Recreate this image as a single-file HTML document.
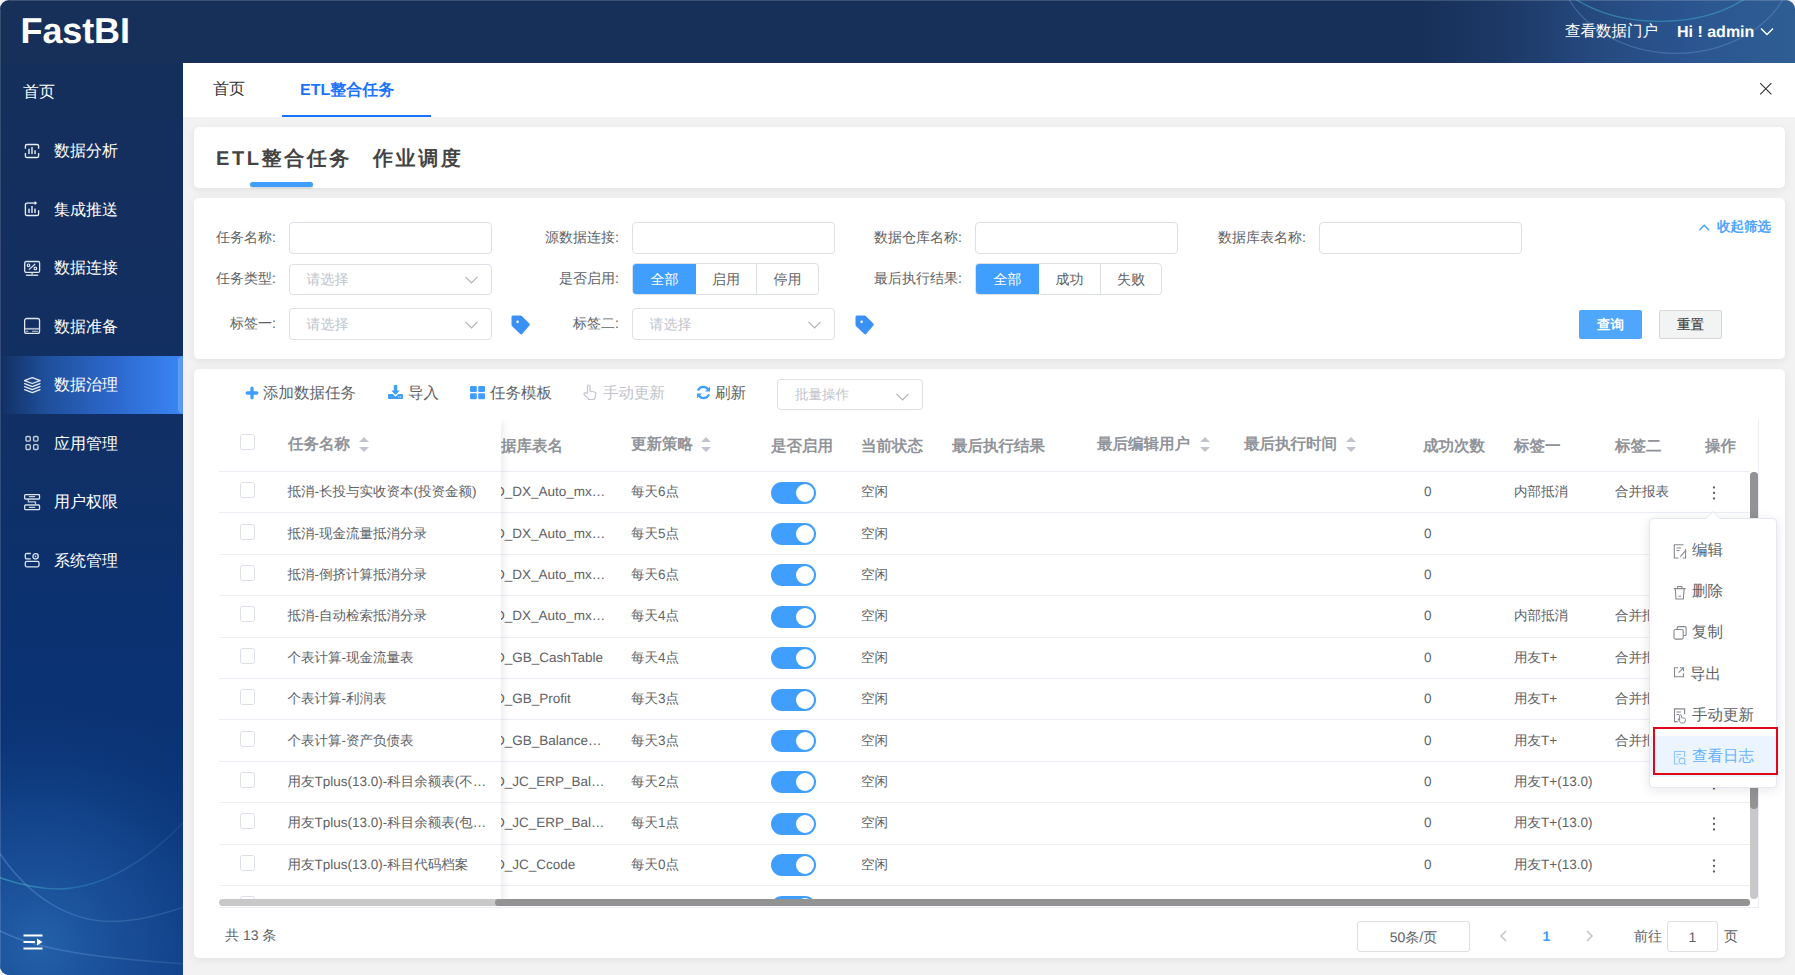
<!DOCTYPE html><html><head><meta charset="utf-8"><style>
*{box-sizing:border-box;margin:0;padding:0}
html,body{width:1795px;height:975px;overflow:hidden;background:#f2f2f2;font-family:"Liberation Sans",sans-serif;color:#606266;text-rendering:geometricPrecision}
.abs{position:absolute}
.t{position:absolute;white-space:nowrap}
#hdr{position:absolute;left:0;top:0;width:1795px;height:63px;border-radius:9px 9px 0 0;overflow:hidden;
 background:linear-gradient(90deg,#17305a 0px,#17305a 1420px,#1c3865 1500px,#264a80 1600px,#2b5590 1690px,#2e5e93 1795px)}
#side{position:absolute;left:0;top:63px;width:183px;height:912px;border-radius:0 0 0 9px;overflow:hidden;
 background:linear-gradient(180deg,#152f5c 0%,#122f62 35%,#0b3170 62%,#0a3477 80%,#0c3a80 100%)}
#main{position:absolute;left:183px;top:63px;width:1612px;height:912px;background:#f2f2f2;border-radius:0 0 10px 0}
.card{position:absolute;background:#fff;border-radius:5px;box-shadow:0 2px 8px rgba(0,0,0,.07)}
.mi{position:absolute;left:54px;font-size:16px;line-height:18px;color:#fff}
.ico{position:absolute;left:24px}
.lbl{position:absolute;font-size:14px;line-height:16px;color:#606266;text-align:right}
.inp{position:absolute;height:32px;width:203px;border:1px solid #dcdfe6;border-radius:4px;background:#fff}
.ph{position:absolute;left:16.5px;top:6px;font-size:14px;line-height:16px;color:#c0c4cc}
.chev{position:absolute;right:13px;top:11px}
.rg{position:absolute;height:32px;border:1px solid #dcdfe6;border-radius:4px;overflow:hidden;display:flex;background:#fff}
.rg div{height:30px;line-height:30px;text-align:center;font-size:14px;color:#606266}
.rg .on{background:#409eff;color:#fff}
.th{position:absolute;font-size:15.5px;line-height:18px;font-weight:bold;color:#909399;white-space:nowrap}
.td{position:absolute;font-size:13.5px;line-height:16px;color:#606266;white-space:nowrap}
.rl{position:absolute;height:1px;background:#ebeef5}
.cb{position:absolute;width:15px;height:16px;border:1px solid #dcdfe6;border-radius:2.5px;background:#fff}
.sw{position:absolute;width:45px;height:22px;border-radius:11px;background:#409eff}
.sw:after{content:"";position:absolute;right:2px;top:2px;width:18px;height:18px;border-radius:50%;background:#fff}
.tb{position:absolute;font-size:15.5px;line-height:18px;margin-top:1.2px;color:#606266;white-space:nowrap}
.pm{position:absolute;left:43px;font-size:15.5px;line-height:18px;color:#606266;white-space:nowrap}
.pi{position:absolute;left:24px}
</style></head><body>
<div id="hdr">
<svg class="abs" style="left:0;top:0" width="1795" height="63">
 <ellipse cx="1660" cy="-45" rx="113" ry="66.4" fill="none" stroke="#3aa8c8" stroke-opacity=".55" stroke-width="1.4"/>
 <ellipse cx="1676" cy="-40" rx="118" ry="93.4" fill="none" stroke="#7fb0e0" stroke-opacity=".3" stroke-width="1.3"/>
</svg>
<div class="t" style="left:20.5px;top:13.3px;font-size:36px;font-weight:bold;color:#fff;letter-spacing:-0.1px;line-height:36px">FastBI</div>
<div class="t" style="left:1565px;top:23px;font-size:15.5px;color:#fff;line-height:18px">查看数据门户</div>
<div class="t" style="left:1677px;top:23.5px;font-size:16px;font-weight:bold;color:#fff;line-height:18px">Hi ! admin</div>
<svg class="abs" style="left:1760px;top:27px" width="14" height="9"><path d="M1 1.5 L7 7.5 L13 1.5" fill="none" stroke="#fff" stroke-width="1.4"/></svg>
</div>
<div id="side">
<svg class="abs" style="left:0;top:0" width="183" height="912">
 <defs><radialGradient id="rg1" gradientUnits="userSpaceOnUse" cx="40" cy="880" r="260"><stop offset="0" stop-color="#2868b0" stop-opacity=".85"/><stop offset=".5" stop-color="#1d55a0" stop-opacity=".45"/><stop offset="1" stop-color="#0a3373" stop-opacity="0"/></radialGradient>
 <linearGradient id="lg1" gradientUnits="userSpaceOnUse" x1="0" y1="0" x2="183" y2="0"><stop offset="0" stop-color="#3fb0c8" stop-opacity=".6"/><stop offset=".5" stop-color="#3aa0c8" stop-opacity=".35"/><stop offset="1" stop-color="#5a90d0" stop-opacity=".15"/></linearGradient>
 <linearGradient id="lg2" gradientUnits="userSpaceOnUse" x1="0" y1="0" x2="183" y2="0"><stop offset="0" stop-color="#8ab8e8" stop-opacity=".32"/><stop offset="1" stop-color="#8ab8e8" stop-opacity=".15"/></linearGradient></defs>
 <rect x="0" y="500" width="183" height="412" fill="url(#rg1)"/>
 <path d="M0 814.7 C 20 822, 40 826, 60 826 C 105 825, 150 795, 183 759.7" fill="none" stroke="url(#lg1)" stroke-width="1.5"/>
 <path d="M0 790.7 C 30 835, 70 858, 110 858.4 C 140 858.5, 165 850, 183 844.3" fill="none" stroke="url(#lg2)" stroke-width="1.4"/>
 <path d="M0 868 C 40 888, 100 895, 183 900.7" fill="none" stroke="url(#lg2)" stroke-width="1.4"/>
</svg>
<div class="t" style="left:23px;top:20.5px;font-size:16px;line-height:18px;color:#fff">首页</div>
<div class="abs" style="left:0;top:293px;width:183px;height:58px;background:linear-gradient(90deg,rgba(40,100,200,0) 0%,#1f4f9a 25%,#2d6ad0 65%,#3a86f5 100%)"></div>
<div class="abs" style="left:177.5px;top:293px;width:5.5px;height:58px;border-radius:5px 0 0 5px;background:linear-gradient(90deg,rgba(255,255,255,.22),rgba(255,255,255,.12))"></div>
<div class="mi" style="top:80.0px">数据分析</div>
<div class="mi" style="top:138.5px">集成推送</div>
<div class="mi" style="top:197.0px">数据连接</div>
<div class="mi" style="top:255.5px">数据准备</div>
<div class="mi" style="top:314.0px">数据治理</div>
<div class="mi" style="top:372.5px">应用管理</div>
<div class="mi" style="top:431.0px">用户权限</div>
<div class="mi" style="top:489.5px">系统管理</div>
<svg class="abs" style="left:24.0px;top:80.0px" width="17" height="17"><path d="M1.4 5.8 V3.1 Q1.4 1.5 3 1.5 H13 Q14.6 1.5 14.6 3.1 V5.8 M1.4 10 V12.9 Q1.4 14.5 3 14.5 H13 Q14.6 14.5 14.6 12.9 V10" fill="none" stroke="#e8edf5" stroke-width="1.35"/><rect x="4" y="5.8" width="2" height="5.3" fill="#aab6ca"/><rect x="7" y="4" width="2" height="7.1" fill="#aab6ca"/><rect x="10" y="7.3" width="2" height="3.8" fill="#aab6ca"/></svg>
<svg class="abs" style="left:24.0px;top:137.0px" width="17" height="17"><path d="M11 3.1 H3 Q1.4 3.1 1.4 4.7 V13.9 Q1.4 15.5 3 15.5 H13 Q14.6 15.5 14.6 13.9 V10.3" fill="none" stroke="#e8edf5" stroke-width="1.35"/><path d="M3 3.1 H11" stroke="#aab6ca" stroke-width="1.4"/><path d="M10.6 0.9 L13.2 3.1 L10.6 5.3 Z" fill="#e8edf5"/><rect x="4" y="8.6" width="2" height="4.4" fill="#aab6ca"/><rect x="7" y="6" width="2" height="7" fill="#aab6ca"/><rect x="10" y="8.6" width="2" height="4.4" fill="#aab6ca"/></svg>
<svg class="abs" style="left:24.0px;top:196.0px" width="17" height="18"><rect x="0.7" y="2.5" width="14.9" height="10.9" rx="1.5" fill="none" stroke="#e0e6f0" stroke-width="1.3"/><circle cx="4.5" cy="6.3" r="1.3" fill="none" stroke="#e0e6f0" stroke-width="1.2"/><circle cx="11.4" cy="9.4" r="1.3" fill="none" stroke="#e0e6f0" stroke-width="1.2"/><path d="M5.2 10.4 L10.9 5.2" stroke="#e0e6f0" stroke-width="1.2" stroke-linecap="round"/><path d="M8.1 13.4 V15.6" stroke="#c8d0de" stroke-width="1.4"/><path d="M2.4 16.2 H13.6" stroke="#c8d0de" stroke-width="1.4" stroke-linecap="round"/></svg>
<svg class="abs" style="left:24.0px;top:254.0px" width="17" height="18"><rect x="0.65" y="1.5" width="14.9" height="14.9" rx="2" fill="none" stroke="#e0e6f0" stroke-width="1.3"/><path d="M1 11.8 H15.2" stroke="#a8b4c8" stroke-width="1.8"/><path d="M2.5 14.3 H3.8 M8.5 14.3 H13.5" stroke="#c8d0de" stroke-width="1.1" stroke-linecap="round"/></svg>
<svg class="abs" style="left:23.6px;top:313.8px" width="17" height="17"><path d="M8.3 0.7 L16.2 3.6 L8.3 6.5 L0.4 3.6 Z" fill="none" stroke="#e6ecf5" stroke-width="1.3" stroke-linejoin="round"/><path d="M0.6 6.7 L8.3 9.6 L16 6.7 M0.6 9.7 L8.3 12.6 L16 9.7 M0.6 12.7 L8.3 15.6 L16 12.7" fill="none" stroke="#e6ecf5" stroke-width="1.3" stroke-linejoin="round" stroke-linecap="round"/></svg>
<svg class="abs" style="left:24.0px;top:372.0px" width="17" height="17"><rect x="2" y="1.5" width="4.3" height="4.6" rx="1.1" fill="none" stroke="#c4cddc" stroke-width="1.4"/><rect x="9.6" y="1.5" width="4.4" height="4.6" rx="1.1" fill="none" stroke="#c4cddc" stroke-width="1.4"/><rect x="2" y="9.6" width="4.3" height="4.9" rx="1.1" fill="none" stroke="#c4cddc" stroke-width="1.4"/><rect x="9.6" y="9.6" width="4.4" height="4.9" rx="1.1" fill="none" stroke="#c4cddc" stroke-width="1.4"/></svg>
<svg class="abs" style="left:24.0px;top:431.0px" width="17" height="17"><rect x="0.65" y="0.5" width="14.9" height="4.6" rx="1.2" fill="none" stroke="#e0e6f0" stroke-width="1.3"/><rect x="0.65" y="10.9" width="14.9" height="4.7" rx="1.2" fill="none" stroke="#e0e6f0" stroke-width="1.3"/><path d="M1 5 H15.2 M1 10.9 H15.2" stroke="#a8b4c8" stroke-width="1.6"/><path d="M4.4 5 V7.8 H11.5 V10.8" fill="none" stroke="#c0cadb" stroke-width="1.3"/><path d="M5.3 2.6 H10.7 M5.3 13.4 H10.7" stroke="#c8d0de" stroke-width="1.1" stroke-linecap="round"/></svg>
<svg class="abs" style="left:24.0px;top:489.0px" width="17" height="17"><path d="M6.8 1.5 H2.8 Q1.3 1.5 1.3 3 V5.3 Q1.3 6.8 2.8 6.8 H6.8" fill="none" stroke="#e0e6f0" stroke-width="1.3"/><circle cx="11.6" cy="4.3" r="2.7" fill="none" stroke="#e0e6f0" stroke-width="1.25"/><circle cx="11.6" cy="4.3" r="0.9" fill="#e0e6f0"/><rect x="1.3" y="9.4" width="13.7" height="5.4" rx="1.5" fill="none" stroke="#e0e6f0" stroke-width="1.3"/></svg>
<svg class="abs" style="left:22.5px;top:871px" width="21" height="17"><path d="M0.5 1.5 H19.5 M0.5 8 H12 M0.5 14.5 H19.5" stroke="#fff" stroke-width="2"/><path d="M14 4.5 L19.5 8 L14 11.5 Z" fill="#fff"/></svg>
</div>
<div id="main">
<div class="abs" style="left:0;top:0;width:1612px;height:54px;background:#fff"></div>
<div class="t" style="left:30px;top:18px;font-size:16px;line-height:18px;color:#303133">首页</div>
<div class="t" style="left:117px;top:18.5px;font-size:16px;line-height:18px;font-weight:bold;color:#1a73ff">ETL整合任务</div>
<div class="abs" style="left:99px;top:52px;width:149px;height:2px;background:#1a73ff"></div>
<svg class="abs" style="left:1576px;top:19px" width="14" height="14"><path d="M1.2 1.2 L12.4 12.4 M12.4 1.2 L1.2 12.4" stroke="#303133" stroke-width="1.1"/></svg>
<div class="card" style="left:11px;top:64px;width:1591px;height:61px">
<div class="t" style="left:22px;top:20.5px;font-size:20px;line-height:22px;font-weight:bold;color:#444;letter-spacing:2.6px">ETL整合任务</div>
<div class="t" style="left:179px;top:20.5px;font-size:20px;line-height:22px;font-weight:bold;color:#444;letter-spacing:2.6px">作业调度</div>
<div class="abs" style="left:56px;top:55px;width:63px;height:5px;border-radius:3px;background:#409eff;box-shadow:0 1px 2px rgba(0,0,0,.2)"></div>
</div>
</div>
<div class="card" style="left:194px;top:198px;width:1591px;height:161px"></div>
<div class="lbl" style="left:126px;top:229.3px;width:150px">任务名称:</div>
<div class="inp" style="left:289px;top:222px"></div>
<div class="lbl" style="left:469px;top:229.3px;width:150px">源数据连接:</div>
<div class="inp" style="left:632px;top:222px"></div>
<div class="lbl" style="left:812px;top:229.3px;width:150px">数据仓库名称:</div>
<div class="inp" style="left:975px;top:222px"></div>
<div class="lbl" style="left:1156px;top:229.3px;width:150px">数据库表名称:</div>
<div class="inp" style="left:1319px;top:222px"></div>
<div class="lbl" style="left:126px;top:270.3px;width:150px">任务类型:</div>
<div class="inp" style="left:289px;top:264px;height:31px"><div class="ph">请选择</div><svg class="chev" width="13" height="8"><path d="M0.5 0.8 L6.5 6.8 L12.5 0.8" fill="none" stroke="#b0b3b8" stroke-width="1.2"/></svg></div>
<div class="lbl" style="left:469px;top:270.3px;width:150px">是否启用:</div>
<div class="rg" style="left:632px;top:263px;width:187px"><div class="on" style="width:63px">全部</div><div style="width:61px;border-right:1px solid #dcdfe6">启用</div><div style="width:61px">停用</div></div>
<div class="lbl" style="left:812px;top:270.3px;width:150px">最后执行结果:</div>
<div class="rg" style="left:975px;top:263px;width:187px"><div class="on" style="width:63px">全部</div><div style="width:62px;border-right:1px solid #dcdfe6">成功</div><div style="width:60px">失败</div></div>
<div class="lbl" style="left:126px;top:315.3px;width:150px">标签一:</div>
<div class="inp" style="left:289px;top:308px"><div class="ph" style="top:6.5px">请选择</div><svg class="chev" style="top:12px" width="13" height="8"><path d="M0.5 0.8 L6.5 6.8 L12.5 0.8" fill="none" stroke="#b0b3b8" stroke-width="1.2"/></svg></div>
<div class="lbl" style="left:469px;top:315.3px;width:150px">标签二:</div>
<div class="inp" style="left:632px;top:308px"><div class="ph" style="top:6.5px">请选择</div><svg class="chev" style="top:12px" width="13" height="8"><path d="M0.5 0.8 L6.5 6.8 L12.5 0.8" fill="none" stroke="#b0b3b8" stroke-width="1.2"/></svg></div>
<svg class="abs" style="left:511px;top:315px" width="20" height="21"><path d="M2 0.5 H9.6 Q10.3 0.5 10.8 1 L18.3 8.6 Q19.3 9.6 18.4 10.6 L11.3 18.8 Q10.3 19.9 9.3 18.9 L1.1 11.2 Q0.5 10.6 0.5 9.8 V2 Q0.5 0.5 2 0.5 Z" fill="#3990f5"/><circle cx="6.6" cy="6.8" r="1.3" fill="#fff"/></svg>
<svg class="abs" style="left:855px;top:315px" width="20" height="21"><path d="M2 0.5 H9.6 Q10.3 0.5 10.8 1 L18.3 8.6 Q19.3 9.6 18.4 10.6 L11.3 18.8 Q10.3 19.9 9.3 18.9 L1.1 11.2 Q0.5 10.6 0.5 9.8 V2 Q0.5 0.5 2 0.5 Z" fill="#3990f5"/><circle cx="6.6" cy="6.8" r="1.3" fill="#fff"/></svg>
<svg class="abs" style="left:1698px;top:222.5px" width="13" height="9"><path d="M1.3 7.3 L6.2 2.3 L11.1 7.3" fill="none" stroke="#4ea5ff" stroke-width="1.5"/></svg>
<div class="t" style="left:1717px;top:219px;font-size:13.5px;line-height:16px;font-weight:bold;color:#4ea5ff">收起筛选</div>
<div class="abs" style="left:1579px;top:310px;width:63px;height:29px;border-radius:2px;background:#4fa7fc;color:#fff;font-size:13.5px;line-height:29px;text-align:center;font-weight:bold">查询</div>
<div class="abs" style="left:1659px;top:310px;width:63px;height:29px;background:#f2f3f3;border:1px solid #d7d7d7;border-radius:2px;color:#3c3c3c;font-size:13.5px;line-height:27px;text-align:center;-webkit-text-stroke:0.15px #3c3c3c">重置</div>
<div class="card" style="left:194px;top:369px;width:1591px;height:589px"></div>
<svg class="abs" style="left:244.5px;top:385.5px" width="14" height="14"><path d="M7 2.2 V11.8 M2.2 7 H11.8" stroke="#409eff" stroke-width="3.3" stroke-linecap="round"/></svg>
<div class="tb" style="left:263px;top:384px">添加数据任务</div>
<svg class="abs" style="left:388px;top:385px" width="15" height="14"><rect x="0" y="9" width="15" height="5" rx="1" fill="#409eff"/><path d="M2.2 5.2 H12.8 L7.5 10.6 Z" fill="#409eff" stroke="#fff" stroke-width="1.6" stroke-linejoin="miter"/><rect x="5.8" y="0" width="3.4" height="6.5" fill="#409eff"/><path d="M3.3 5.6 H11.7 L7.5 9.8 Z" fill="#409eff"/><rect x="10.3" y="11.4" width="1" height="1" fill="#fff"/><rect x="12.2" y="11.4" width="1" height="1" fill="#fff"/></svg>
<div class="tb" style="left:408px;top:384px">导入</div>
<svg class="abs" style="left:470px;top:385.5px" width="16" height="14"><rect x="0" y="0" width="6.8" height="6" rx="1.2" fill="#409eff"/><rect x="8.2" y="0" width="6.8" height="6" rx="1.2" fill="#409eff"/><rect x="0" y="7.3" width="6.8" height="6" rx="1.2" fill="#409eff"/><rect x="8.2" y="7.3" width="6.8" height="6" rx="1.2" fill="#409eff"/></svg>
<div class="tb" style="left:490px;top:384px">任务模板</div>
<svg class="abs" style="left:582px;top:384px" width="16" height="17"><path d="M5.5 9 V2.5 Q5.5 1 6.8 1 Q8 1 8 2.5 V7 L12.5 8 Q14 8.5 13.8 10 L13 14 Q12.6 15.5 11 15.5 H7.5 Q6.5 15.5 6 14.6 L2.3 10.5 Q1.5 9.4 2.6 8.8 Q3.5 8.4 4.3 9.2 Z" fill="none" stroke="#c0c4cc" stroke-width="1.2"/></svg>
<div class="tb" style="left:603px;top:384px;color:#c0c4cc">手动更新</div>
<svg class="abs" style="left:696px;top:385px" width="15" height="15"><path d="M12.6 5.2 A5.8 5.8 0 0 0 2 5.6" fill="none" stroke="#409eff" stroke-width="2.2"/><path d="M2.4 9.8 A5.8 5.8 0 0 0 13 9.4" fill="none" stroke="#409eff" stroke-width="2.2"/><path d="M14 1.5 V6.5 H9 Z" fill="#409eff"/><path d="M1 13.5 V8.5 H6 Z" fill="#409eff"/></svg>
<div class="tb" style="left:715px;top:384px">刷新</div>
<div class="abs" style="left:777px;top:379px;width:146px;height:31px;border:1px solid #dcdfe6;border-radius:4px"><div class="t" style="left:17px;top:7px;font-size:13.5px;line-height:16px;color:#c0c4cc">批量操作</div><svg class="abs" style="left:118px;top:13px" width="13" height="8"><path d="M0.5 0.8 L6.5 6.8 L12.5 0.8" fill="none" stroke="#b0b3b8" stroke-width="1.2"/></svg></div>
<div class="abs" style="left:219px;top:420px;width:1540px;height:488px;overflow:hidden;border-right:1px solid #ebeef5;border-bottom:1px solid #ebeef5">
<div class="rl" style="left:0;top:51px;width:1531px"></div>
<div class="th" style="left:282.0px;top:17.5px">据库表名</div>
<div class="th" style="left:412.0px;top:16.0px">更新策略</div>
<svg class="abs" style="left:482.0px;top:17.0px" width="10" height="16"><path d="M0 5 L5 0 L10 5 Z M0 10 L5 15 L10 10 Z" fill="#c0c4cc"/></svg>
<div class="th" style="left:552.0px;top:18.0px">是否启用</div>
<div class="th" style="left:642.0px;top:18.0px">当前状态</div>
<div class="th" style="left:733.0px;top:18.0px">最后执行结果</div>
<div class="th" style="left:878.0px;top:16.0px">最后编辑用户</div>
<svg class="abs" style="left:981.0px;top:17.0px" width="10" height="16"><path d="M0 5 L5 0 L10 5 Z M0 10 L5 15 L10 10 Z" fill="#c0c4cc"/></svg>
<div class="th" style="left:1025.0px;top:16.0px">最后执行时间</div>
<svg class="abs" style="left:1127.0px;top:17.0px" width="10" height="16"><path d="M0 5 L5 0 L10 5 Z M0 10 L5 15 L10 10 Z" fill="#c0c4cc"/></svg>
<div class="th" style="left:1204.0px;top:18.0px">成功次数</div>
<div class="th" style="left:1295.0px;top:18.0px">标签一</div>
<div class="th" style="left:1396.0px;top:18.0px">标签二</div>
<div class="th" style="left:1486.0px;top:18.0px">操作</div>
<div class="rl" style="left:0;top:92.3px;width:1531px"></div>
<div class="td" style="left:276.0px;top:64.1px">D_DX_Auto_mx…</div>
<div class="td" style="left:412.0px;top:64.1px">每天6点</div>
<div class="sw" style="left:552px;top:61.6px"></div>
<div class="td" style="left:642.0px;top:64.1px">空闲</div>
<div class="td" style="left:1205.0px;top:64.1px">0</div>
<div class="td" style="left:1295.0px;top:64.1px">内部抵消</div>
<div class="td" style="left:1396.0px;top:64.1px">合并报表</div>
<svg class="abs" style="left:1493.0px;top:65.9px" width="4" height="14"><circle cx="2" cy="1.5" r="1.15" fill="#5f6166"/><circle cx="2" cy="7" r="1.15" fill="#5f6166"/><circle cx="2" cy="12.5" r="1.15" fill="#5f6166"/></svg>
<div class="rl" style="left:0;top:133.7px;width:1531px"></div>
<div class="td" style="left:276.0px;top:105.5px">D_DX_Auto_mx…</div>
<div class="td" style="left:412.0px;top:105.5px">每天5点</div>
<div class="sw" style="left:552px;top:103.0px"></div>
<div class="td" style="left:642.0px;top:105.5px">空闲</div>
<div class="td" style="left:1205.0px;top:105.5px">0</div>
<div class="td" style="left:1295.0px;top:105.5px"></div>
<div class="td" style="left:1396.0px;top:105.5px"></div>
<svg class="abs" style="left:1493.0px;top:107.3px" width="4" height="14"><circle cx="2" cy="1.5" r="1.15" fill="#5f6166"/><circle cx="2" cy="7" r="1.15" fill="#5f6166"/><circle cx="2" cy="12.5" r="1.15" fill="#5f6166"/></svg>
<div class="rl" style="left:0;top:175.1px;width:1531px"></div>
<div class="td" style="left:276.0px;top:146.9px">D_DX_Auto_mx…</div>
<div class="td" style="left:412.0px;top:146.9px">每天6点</div>
<div class="sw" style="left:552px;top:144.4px"></div>
<div class="td" style="left:642.0px;top:146.9px">空闲</div>
<div class="td" style="left:1205.0px;top:146.9px">0</div>
<div class="td" style="left:1295.0px;top:146.9px"></div>
<div class="td" style="left:1396.0px;top:146.9px"></div>
<svg class="abs" style="left:1493.0px;top:148.7px" width="4" height="14"><circle cx="2" cy="1.5" r="1.15" fill="#5f6166"/><circle cx="2" cy="7" r="1.15" fill="#5f6166"/><circle cx="2" cy="12.5" r="1.15" fill="#5f6166"/></svg>
<div class="rl" style="left:0;top:216.5px;width:1531px"></div>
<div class="td" style="left:276.0px;top:188.3px">D_DX_Auto_mx…</div>
<div class="td" style="left:412.0px;top:188.3px">每天4点</div>
<div class="sw" style="left:552px;top:185.8px"></div>
<div class="td" style="left:642.0px;top:188.3px">空闲</div>
<div class="td" style="left:1205.0px;top:188.3px">0</div>
<div class="td" style="left:1295.0px;top:188.3px">内部抵消</div>
<div class="td" style="left:1396.0px;top:188.3px">合并报表</div>
<svg class="abs" style="left:1493.0px;top:190.1px" width="4" height="14"><circle cx="2" cy="1.5" r="1.15" fill="#5f6166"/><circle cx="2" cy="7" r="1.15" fill="#5f6166"/><circle cx="2" cy="12.5" r="1.15" fill="#5f6166"/></svg>
<div class="rl" style="left:0;top:257.9px;width:1531px"></div>
<div class="td" style="left:276.0px;top:229.7px">D_GB_CashTable</div>
<div class="td" style="left:412.0px;top:229.7px">每天4点</div>
<div class="sw" style="left:552px;top:227.2px"></div>
<div class="td" style="left:642.0px;top:229.7px">空闲</div>
<div class="td" style="left:1205.0px;top:229.7px">0</div>
<div class="td" style="left:1295.0px;top:229.7px">用友T+</div>
<div class="td" style="left:1396.0px;top:229.7px">合并报表</div>
<svg class="abs" style="left:1493.0px;top:231.5px" width="4" height="14"><circle cx="2" cy="1.5" r="1.15" fill="#5f6166"/><circle cx="2" cy="7" r="1.15" fill="#5f6166"/><circle cx="2" cy="12.5" r="1.15" fill="#5f6166"/></svg>
<div class="rl" style="left:0;top:299.3px;width:1531px"></div>
<div class="td" style="left:276.0px;top:271.1px">D_GB_Profit</div>
<div class="td" style="left:412.0px;top:271.1px">每天3点</div>
<div class="sw" style="left:552px;top:268.6px"></div>
<div class="td" style="left:642.0px;top:271.1px">空闲</div>
<div class="td" style="left:1205.0px;top:271.1px">0</div>
<div class="td" style="left:1295.0px;top:271.1px">用友T+</div>
<div class="td" style="left:1396.0px;top:271.1px">合并报表</div>
<svg class="abs" style="left:1493.0px;top:272.9px" width="4" height="14"><circle cx="2" cy="1.5" r="1.15" fill="#5f6166"/><circle cx="2" cy="7" r="1.15" fill="#5f6166"/><circle cx="2" cy="12.5" r="1.15" fill="#5f6166"/></svg>
<div class="rl" style="left:0;top:340.7px;width:1531px"></div>
<div class="td" style="left:276.0px;top:312.5px">D_GB_Balance…</div>
<div class="td" style="left:412.0px;top:312.5px">每天3点</div>
<div class="sw" style="left:552px;top:310.0px"></div>
<div class="td" style="left:642.0px;top:312.5px">空闲</div>
<div class="td" style="left:1205.0px;top:312.5px">0</div>
<div class="td" style="left:1295.0px;top:312.5px">用友T+</div>
<div class="td" style="left:1396.0px;top:312.5px">合并报表</div>
<svg class="abs" style="left:1493.0px;top:314.3px" width="4" height="14"><circle cx="2" cy="1.5" r="1.15" fill="#5f6166"/><circle cx="2" cy="7" r="1.15" fill="#5f6166"/><circle cx="2" cy="12.5" r="1.15" fill="#5f6166"/></svg>
<div class="rl" style="left:0;top:382.1px;width:1531px"></div>
<div class="td" style="left:276.0px;top:353.9px">D_JC_ERP_Bal…</div>
<div class="td" style="left:412.0px;top:353.9px">每天2点</div>
<div class="sw" style="left:552px;top:351.4px"></div>
<div class="td" style="left:642.0px;top:353.9px">空闲</div>
<div class="td" style="left:1205.0px;top:353.9px">0</div>
<div class="td" style="left:1295.0px;top:353.9px">用友T+(13.0)</div>
<div class="td" style="left:1396.0px;top:353.9px"></div>
<svg class="abs" style="left:1493.0px;top:355.7px" width="4" height="14"><circle cx="2" cy="1.5" r="1.15" fill="#5f6166"/><circle cx="2" cy="7" r="1.15" fill="#5f6166"/><circle cx="2" cy="12.5" r="1.15" fill="#5f6166"/></svg>
<div class="rl" style="left:0;top:423.5px;width:1531px"></div>
<div class="td" style="left:276.0px;top:395.3px">D_JC_ERP_Bal…</div>
<div class="td" style="left:412.0px;top:395.3px">每天1点</div>
<div class="sw" style="left:552px;top:392.8px"></div>
<div class="td" style="left:642.0px;top:395.3px">空闲</div>
<div class="td" style="left:1205.0px;top:395.3px">0</div>
<div class="td" style="left:1295.0px;top:395.3px">用友T+(13.0)</div>
<div class="td" style="left:1396.0px;top:395.3px"></div>
<svg class="abs" style="left:1493.0px;top:397.1px" width="4" height="14"><circle cx="2" cy="1.5" r="1.15" fill="#5f6166"/><circle cx="2" cy="7" r="1.15" fill="#5f6166"/><circle cx="2" cy="12.5" r="1.15" fill="#5f6166"/></svg>
<div class="rl" style="left:0;top:464.9px;width:1531px"></div>
<div class="td" style="left:276.0px;top:436.7px">D_JC_Ccode</div>
<div class="td" style="left:412.0px;top:436.7px">每天0点</div>
<div class="sw" style="left:552px;top:434.2px"></div>
<div class="td" style="left:642.0px;top:436.7px">空闲</div>
<div class="td" style="left:1205.0px;top:436.7px">0</div>
<div class="td" style="left:1295.0px;top:436.7px">用友T+(13.0)</div>
<div class="td" style="left:1396.0px;top:436.7px"></div>
<svg class="abs" style="left:1493.0px;top:438.5px" width="4" height="14"><circle cx="2" cy="1.5" r="1.15" fill="#5f6166"/><circle cx="2" cy="7" r="1.15" fill="#5f6166"/><circle cx="2" cy="12.5" r="1.15" fill="#5f6166"/></svg>
<div class="rl" style="left:0;top:506.3px;width:1531px"></div>
<div class="sw" style="left:552px;top:475.6px"></div>
<div class="cb" style="left:21px;top:476.1px"></div>
<div class="abs" style="left:0;top:0;width:282px;height:488px;background:#fff;box-shadow:0 0 10px rgba(0,0,0,.12)">
<div class="rl" style="left:0;top:51px;width:282px"></div>
<div class="cb" style="left:21px;top:14px"></div>
<div class="th" style="left:69.0px;top:16.0px">任务名称</div>
<svg class="abs" style="left:139.5px;top:17.0px" width="10" height="16"><path d="M0 5 L5 0 L10 5 Z M0 10 L5 15 L10 10 Z" fill="#c0c4cc"/></svg>
<div class="rl" style="left:0;top:92.3px;width:282px"></div>
<div class="cb" style="left:21px;top:62.1px"></div>
<div class="td" style="left:68.5px;top:64.1px">抵消-长投与实收资本(投资金额)</div>
<div class="rl" style="left:0;top:133.7px;width:282px"></div>
<div class="cb" style="left:21px;top:103.5px"></div>
<div class="td" style="left:68.5px;top:105.5px">抵消-现金流量抵消分录</div>
<div class="rl" style="left:0;top:175.1px;width:282px"></div>
<div class="cb" style="left:21px;top:144.9px"></div>
<div class="td" style="left:68.5px;top:146.9px">抵消-倒挤计算抵消分录</div>
<div class="rl" style="left:0;top:216.5px;width:282px"></div>
<div class="cb" style="left:21px;top:186.3px"></div>
<div class="td" style="left:68.5px;top:188.3px">抵消-自动检索抵消分录</div>
<div class="rl" style="left:0;top:257.9px;width:282px"></div>
<div class="cb" style="left:21px;top:227.7px"></div>
<div class="td" style="left:68.5px;top:229.7px">个表计算-现金流量表</div>
<div class="rl" style="left:0;top:299.3px;width:282px"></div>
<div class="cb" style="left:21px;top:269.1px"></div>
<div class="td" style="left:68.5px;top:271.1px">个表计算-利润表</div>
<div class="rl" style="left:0;top:340.7px;width:282px"></div>
<div class="cb" style="left:21px;top:310.5px"></div>
<div class="td" style="left:68.5px;top:312.5px">个表计算-资产负债表</div>
<div class="rl" style="left:0;top:382.1px;width:282px"></div>
<div class="cb" style="left:21px;top:351.9px"></div>
<div class="td" style="left:68.5px;top:353.9px">用友Tplus(13.0)-科目余额表(不…</div>
<div class="rl" style="left:0;top:423.5px;width:282px"></div>
<div class="cb" style="left:21px;top:393.3px"></div>
<div class="td" style="left:68.5px;top:395.3px">用友Tplus(13.0)-科目余额表(包…</div>
<div class="rl" style="left:0;top:464.9px;width:282px"></div>
<div class="cb" style="left:21px;top:434.7px"></div>
<div class="td" style="left:68.5px;top:436.7px">用友Tplus(13.0)-科目代码档案</div>
<div class="rl" style="left:0;top:506.3px;width:282px"></div>
<div class="cb" style="left:21px;top:476.1px"></div>
</div>
<div class="abs" style="left:0;top:478.5px;width:1540px;height:10px;background:#fff"></div>
<div class="abs" style="left:0;top:479px;width:1531px;height:7px;border-radius:4px;background:#c8c8c8"></div>
<div class="abs" style="left:276px;top:479px;width:1255px;height:7px;border-radius:4px;background:#939393"></div>
<div class="abs" style="left:1531px;top:52px;width:8px;height:427px;border-radius:4px;background:#c8c8c8"></div>
<div class="abs" style="left:1531px;top:52px;width:8px;height:337px;border-radius:4px;background:#939393"></div>
</div>
<div class="t" style="left:225px;top:927px;font-size:14px;line-height:16px;color:#606266">共 13 条</div>
<div class="abs" style="left:1357px;top:921px;width:113px;height:31px;border:1px solid #dcdfe6;border-radius:3px;text-align:center;font-size:14px;line-height:31px;color:#606266">50条/页</div>
<svg class="abs" style="left:1499px;top:930px" width="8" height="12"><path d="M7 1 L2 6 L7 11" fill="none" stroke="#c0c4cc" stroke-width="1.5"/></svg>
<div class="t" style="left:1542.5px;top:928px;font-size:14px;line-height:16px;font-weight:bold;color:#409eff">1</div>
<svg class="abs" style="left:1586px;top:930px" width="8" height="12"><path d="M1 1 L6 6 L1 11" fill="none" stroke="#c0c4cc" stroke-width="1.5"/></svg>
<div class="t" style="left:1634px;top:928px;font-size:14px;line-height:16px;color:#606266">前往</div>
<div class="abs" style="left:1667px;top:921px;width:51px;height:31px;border:1px solid #dcdfe6;border-radius:3px;text-align:center;font-size:14px;line-height:30px;color:#606266">1</div>
<div class="t" style="left:1724px;top:928px;font-size:14px;line-height:16px;color:#606266">页</div>
<div class="abs" style="left:1649px;top:518px;width:128px;height:270px;background:#fff;border:1px solid #e4e7ed;border-radius:4px;box-shadow:0 2px 12px rgba(0,0,0,.1)"></div>
<svg class="abs" style="left:1705px;top:511px" width="16" height="9"><path d="M0 8.5 L8 0.5 L16 8.5" fill="#fff" stroke="#e4e7ed" stroke-width="1"/><rect x="1" y="8" width="14" height="2" fill="#fff"/></svg>
<div class="abs" style="left:1650px;top:736px;width:126px;height:41px;background:#ecf5ff"></div>
<div class="t" style="left:1692px;top:541.7px;font-size:15.5px;line-height:18px;color:#606266">编辑</div>
<div class="t" style="left:1692px;top:583.0px;font-size:15.5px;line-height:18px;color:#606266">删除</div>
<div class="t" style="left:1692px;top:624.3px;font-size:15.5px;line-height:18px;color:#606266">复制</div>
<div class="t" style="left:1690px;top:665.6px;font-size:15.5px;line-height:18px;color:#606266">导出</div>
<div class="t" style="left:1692px;top:706.9px;font-size:15.5px;line-height:18px;color:#606266">手动更新</div>
<div class="t" style="left:1692px;top:748.2px;font-size:15.5px;line-height:18px;color:#66b1ff">查看日志</div>
<svg class="abs" style="left:1673px;top:542.5px" width="15" height="17"><path d="M10.5 1.8 H1.3 V15 H5.5" fill="none" stroke="#85888e" stroke-width="1.1"/><path d="M12.6 6 V15 H9.8" fill="none" stroke="#85888e" stroke-width="1.1"/><path d="M3.5 5 H8 M3.5 7.5 H6.5" stroke="#85888e" stroke-width="1"/><path d="M12.6 7.6 L7.3 13.6" stroke="#85888e" stroke-width="1.1"/></svg>
<svg class="abs" style="left:1673px;top:583.5px" width="15" height="17"><path d="M0.8 4.6 H12.6 M4.6 4.6 V2.5 H8.9 V4.6" fill="none" stroke="#85888e" stroke-width="1.1"/><path d="M2.3 5 L3 15 H10.4 L11.1 5" fill="none" stroke="#85888e" stroke-width="1.1"/><path d="M5.4 12.2 H8" stroke="#85888e" stroke-width="1"/></svg>
<svg class="abs" style="left:1673px;top:624.8px" width="15" height="17"><path d="M4.2 4 V2.9 Q4.2 1.6 5.5 1.6 H11.8 Q13.1 1.6 13.1 2.9 V9.2 Q13.1 10.5 11.8 10.5 H10.6" fill="none" stroke="#85888e" stroke-width="1.1"/><rect x="1" y="4.5" width="9.2" height="9.6" rx="1.6" fill="none" stroke="#85888e" stroke-width="1.1"/></svg>
<svg class="abs" style="left:1673px;top:665.5px" width="15" height="17"><path d="M5 1.8 H1.5 V10.7 H10.5 V7.2" fill="none" stroke="#85888e" stroke-width="1.1"/><path d="M7 1.8 H10.5 V5.3 M10.5 1.8 L5.6 6.7" fill="none" stroke="#85888e" stroke-width="1.1"/></svg>
<svg class="abs" style="left:1673px;top:707.0px" width="15" height="17"><path d="M11.6 7 V1.9 H1.5 V14.6 H4.8" fill="none" stroke="#85888e" stroke-width="1.1"/><path d="M3.5 5 H8 M3.5 7.5 H6" stroke="#85888e" stroke-width="1"/><path d="M6.6 13.2 V8.6 Q6.6 7.7 7.5 7.7 Q8.4 7.7 8.4 8.6 V10.6 L11.6 11.3 Q12.6 11.6 12.4 12.7 L12 14.9 Q11.8 15.9 10.7 15.9 H8.4 Q7.6 15.9 7.1 15.1 L5.3 12.6 Q5 11.8 5.8 11.7 Z" fill="#fff" stroke="#85888e" stroke-width="1"/></svg>
<svg class="abs" style="left:1673px;top:748.5px" width="15" height="17"><path d="M11.6 8 V2.5 H1.5 V15 H5.3" fill="none" stroke="#8cc5ff" stroke-width="1.1"/><path d="M3.5 5.5 H8 M3.5 8 H6" stroke="#8cc5ff" stroke-width="1"/><circle cx="9" cy="12" r="2.9" fill="none" stroke="#8cc5ff" stroke-width="1.1"/><path d="M11.1 14.1 L12.9 15.9" stroke="#8cc5ff" stroke-width="1.1"/></svg>
<div class="abs" style="left:1653px;top:727px;width:125px;height:48px;border:2px solid #e0061b"></div>
<div class="abs" style="left:9px;top:0;width:1777px;height:1px;background:rgba(255,255,255,.16)"></div>
<div class="abs" style="left:0;top:9px;width:1px;height:957px;background:rgba(255,255,255,.14)"></div>
</body></html>
